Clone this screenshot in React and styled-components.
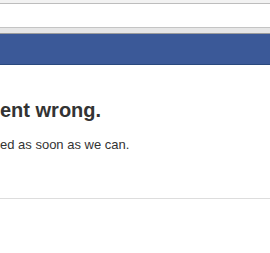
import React from 'react';
import styled, { createGlobalStyle } from 'styled-components';

const GlobalStyle = createGlobalStyle`
  html, body {
    margin: 0;
    padding: 0;
    background: #ffffff;
    overflow: hidden;
  }
  body {
    font-family: "Liberation Sans", Arial, sans-serif;
    color: #333333;
  }
`;

const Page = styled.div`
  width: 270px;
  height: 253px;
  overflow: hidden;
  display: flex;
  flex-direction: column;
`;

const TopStrip = styled.div`
  height: 3px;
  background: #f2f2f2;
  border-bottom: 1px solid #bdbdbd;
`;

const AddressArea = styled.div`
  height: 23px;
  background: #ffffff;
  border-bottom: 1px solid #c4c4c4;
`;

const Band = styled.div`
  height: 5px;
  background: #e6e6e6;
  border-bottom: 1px solid #9c9c9c;
`;

const BlueBar = styled.div`
  height: 30px;
  background: #3b5998;
  border-bottom: 1px solid #29487d;
`;

const Content = styled.div`
  padding: 33px 0 0;
  white-space: nowrap;
  display: flex;
  flex-direction: column;
  gap: 15px;
`;

const Heading = styled.h2`
  margin: 0;
  font-size: 20px;
  line-height: 24px;
  font-weight: bold;
  color: #333333;
`;

const Message = styled.p`
  margin: 0;
  font-size: 13px;
  line-height: 16px;
  color: #333333;
`;

const Divider = styled.div`
  margin-top: 45px;
  height: 1px;
  background: #dddddd;
`;

export default function App() {
  return (
    <Page>
      <GlobalStyle />
      <TopStrip />
      <AddressArea />
      <Band />
      <BlueBar />
      <Content>
        <Heading>ent wrong.</Heading>
        <Message>ed as soon as we can.</Message>
      </Content>
      <Divider />
    </Page>
  );
}
